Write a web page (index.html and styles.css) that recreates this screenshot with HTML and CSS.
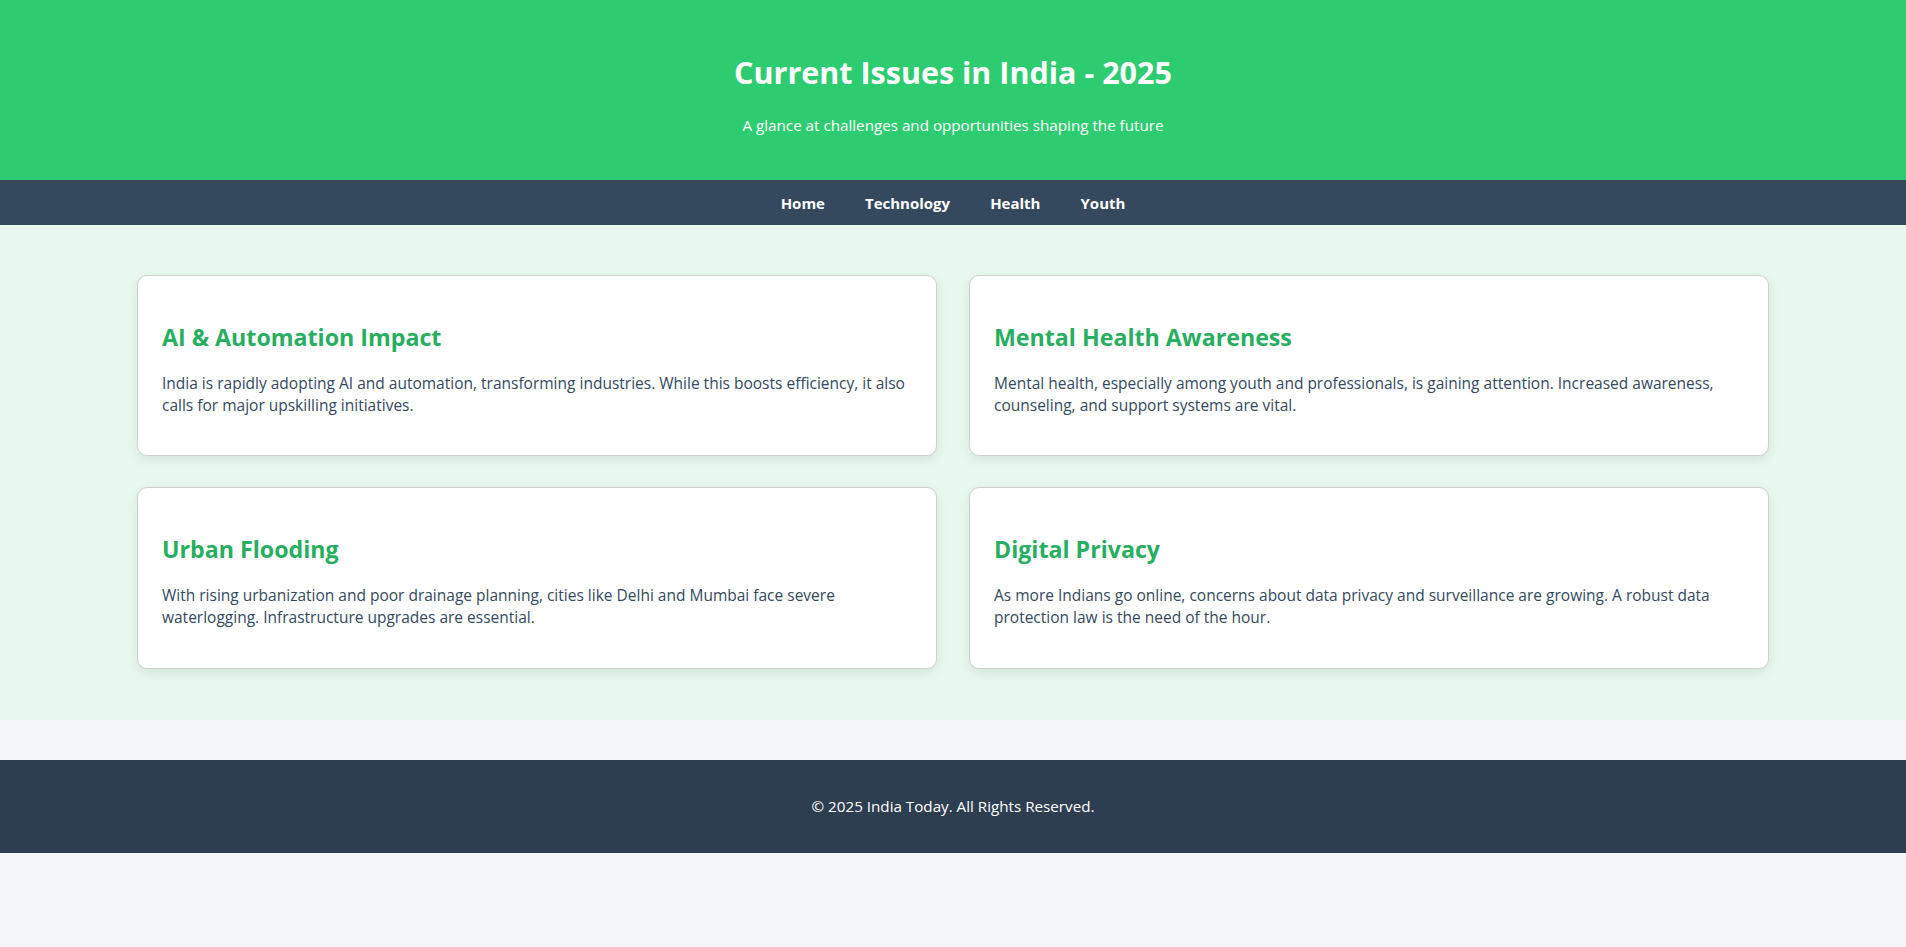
FILE: index.html
```html
<!DOCTYPE html>
<html lang="en">
<head>
<meta charset="utf-8">
<title>Current Issues in India - 2025</title>
<link rel="stylesheet" href="styles.css">
</head>
<body>
<header class="site-header">
  <h1 class="site-title">Current Issues in India - 2025</h1>
  <p class="site-subtitle">A glance at challenges and opportunities shaping the future</p>
</header>
<nav class="site-nav">
  <a class="nav-link" href="#">Home</a>
  <a class="nav-link" href="#">Technology</a>
  <a class="nav-link" href="#">Health</a>
  <a class="nav-link" href="#">Youth</a>
</nav>
<main class="site-main">
  <div class="card-grid">
    <section class="card">
      <h2 class="card-title">AI &amp; Automation Impact</h2>
      <p class="card-text">India is rapidly adopting AI and automation, transforming industries. While this boosts efficiency, it also calls for major upskilling initiatives.</p>
    </section>
    <section class="card">
      <h2 class="card-title">Mental Health Awareness</h2>
      <p class="card-text">Mental health, especially among youth and professionals, is gaining attention. Increased awareness, counseling, and support systems are vital.</p>
    </section>
    <section class="card">
      <h2 class="card-title">Urban Flooding</h2>
      <p class="card-text">With rising urbanization and poor drainage planning, cities like Delhi and Mumbai face severe waterlogging. Infrastructure upgrades are essential.</p>
    </section>
    <section class="card">
      <h2 class="card-title">Digital Privacy</h2>
      <p class="card-text">As more Indians go online, concerns about data privacy and surveillance are growing. A robust data protection law is the need of the hour.</p>
    </section>
  </div>
</main>
<footer class="site-footer">
  <p class="footer-text">&copy; 2025 India Today. All Rights Reserved.</p>
</footer>
</body>
</html>
```
FILE: styles.css
```css
* { box-sizing: border-box; }
html, body {
  margin: 0;
  padding: 0;
  background: #f4f5f7;
  font-family: "Open Sans", "Noto Sans", sans-serif;
}
.site-header {
  background: #2ecc71;
  color: #ffffff;
  text-align: center;
  padding: 32px 16px 44px;
  height: 180px;
}
.site-title {
  margin: 20px 0 0;
  font-size: 30.5px;
  line-height: 40px;
  font-weight: 700;
}
.site-subtitle {
  margin: 22px 0 0;
  font-size: 15.2px;
  line-height: 22px;
}
.site-nav {
  background: #34495e;
  height: 45px;
  display: flex;
  justify-content: center;
  align-items: center;
  gap: 40px;
}
.nav-link {
  color: #ffffff;
  text-decoration: none;
  font-weight: 700;
  font-size: 15px;
}
.site-main {
  background: #e8f8ef;
  padding: 50px 16px 51px;
}
.card-grid {
  max-width: 1632px;
  margin: 0 auto;
  display: grid;
  grid-template-columns: 1fr 1fr;
  gap: 31px 32px;
}
.card {
  background: #ffffff;
  border: 1px solid #cfcfcf;
  border-radius: 10px;
  padding: 25px 24px 23px;
  box-shadow: 0 4px 12px rgba(0, 0, 0, 0.08);
}
.card-title {
  margin: 20px 0 20px;
  color: #27ae60;
  font-size: 23.2px;
  line-height: 32px;
  font-weight: 700;
}
.card-text {
  margin: 0 0 16px;
  color: #34495e;
  font-size: 15.5px;
  line-height: 21.7px;
}
.site-footer {
  margin-top: 40px;
  background: #2c3e50;
  color: #ffffff;
  text-align: center;
  padding: 36px 16px;
}
.footer-text {
  margin: 0;
  font-size: 15.2px;
  line-height: 21px;
}
```
